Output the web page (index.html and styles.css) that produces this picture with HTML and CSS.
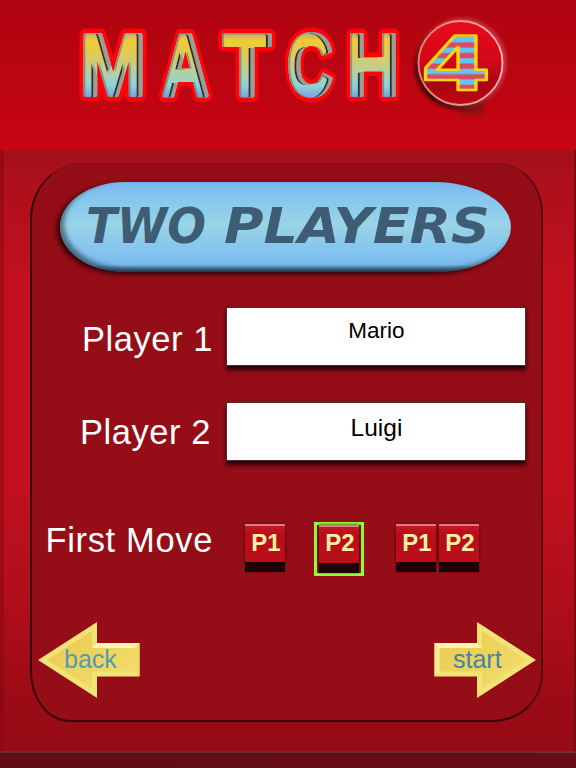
FILE: index.html
```html
<!DOCTYPE html>
<html lang="en">
<head>
<meta charset="utf-8">
<title>Match 4</title>
<link rel="stylesheet" href="styles.css">
</head>
<body>
<header class="banner">
  <svg class="logo" viewBox="0 0 576 150" role="img" aria-label="Match 4">
    <defs>
      <linearGradient id="metal" gradientUnits="userSpaceOnUse" x1="0" y1="31" x2="0" y2="97">
        <stop offset="0" stop-color="#a8a291"/><stop offset=".14" stop-color="#f1cb32"/><stop offset=".36" stop-color="#dfca58"/>
        <stop offset=".6" stop-color="#b9cf9b"/><stop offset=".82" stop-color="#8ed4d5"/><stop offset="1" stop-color="#7ba2df"/>
      </linearGradient>
      <linearGradient id="ball" x1="0" y1="0" x2="0" y2="1">
        <stop offset="0" stop-color="#e90a19"/><stop offset=".45" stop-color="#d4081a"/><stop offset=".75" stop-color="#aa0410"/><stop offset="1" stop-color="#c00713"/>
      </linearGradient>
      <linearGradient id="rim" x1="0" y1="0" x2="1" y2="0">
        <stop offset="0" stop-color="#e78373"/><stop offset=".6" stop-color="#ee9b90"/><stop offset="1" stop-color="#f7b7ba"/>
      </linearGradient>
      <pattern id="stripes" patternUnits="userSpaceOnUse" y="37" width="576" height="10.6">
        <rect width="576" height="10.6" fill="#dc4b63"/><rect width="576" height="5.3" fill="#64c4f7"/>
      </pattern>
      <filter id="soft" x="-20%" y="-20%" width="140%" height="140%"><feGaussianBlur stdDeviation="2"/></filter>
      <filter id="bevel" x="-5%" y="-10%" width="110%" height="120%">
        <feOffset in="SourceAlpha" dx="-6" dy="1" result="o1"/>
        <feComposite in="SourceAlpha" in2="o1" operator="out" result="e1"/>
        <feFlood flood-color="#2f322a"/><feComposite in2="e1" operator="in" result="line"/>
        <feGaussianBlur in="line" stdDeviation=".5" result="lineSoft"/>
        <feComposite in="lineSoft" in2="SourceAlpha" operator="in" result="lineIn"/>
        <feOffset in="SourceAlpha" dx="-4.5" dy="1" result="o2"/>
        <feComposite in="SourceAlpha" in2="o2" operator="out" result="e2"/>
        <feFlood flood-color="#9e9c96"/><feComposite in2="e2" operator="in" result="grey"/>
        <feOffset in="SourceAlpha" dx="1.5" dy="0" result="o3"/>
        <feComposite in="SourceAlpha" in2="o3" operator="out" result="e3"/>
        <feFlood flood-color="#6d8380" flood-opacity=".8"/><feComposite in2="e3" operator="in" result="left"/>
        <feMerge><feMergeNode in="SourceGraphic"/><feMergeNode in="lineIn"/><feMergeNode in="grey"/><feMergeNode in="left"/></feMerge>
      </filter>
    </defs>
    <g class="word word-outline" aria-hidden="true">
      <text x="80" y="95" textLength="66" lengthAdjust="spacingAndGlyphs">M</text>
      <text x="162" y="95" textLength="47" lengthAdjust="spacingAndGlyphs">A</text>
      <text x="223" y="95" textLength="48" lengthAdjust="spacingAndGlyphs">T</text>
      <text x="287" y="95" textLength="46" lengthAdjust="spacingAndGlyphs">C</text>
      <text x="347" y="95" textLength="52" lengthAdjust="spacingAndGlyphs">H</text>
    </g>
    <g class="word word-fill" filter="url(#bevel)">
      <text x="80" y="95" textLength="66" lengthAdjust="spacingAndGlyphs">M</text>
      <text x="162" y="95" textLength="47" lengthAdjust="spacingAndGlyphs">A</text>
      <text x="223" y="95" textLength="48" lengthAdjust="spacingAndGlyphs">T</text>
      <text x="287" y="95" textLength="46" lengthAdjust="spacingAndGlyphs">C</text>
      <text x="347" y="95" textLength="52" lengthAdjust="spacingAndGlyphs">H</text>
    </g>
    <rect x="460" y="95" width="24" height="20" fill="#8d0710" filter="url(#soft)"/>
    <circle cx="457.5" cy="66.500" r="42" fill="#240005" filter="url(#soft)"/>
    <circle cx="462" cy="62.500" r="42" fill="none" stroke="#f39ba0" stroke-width="2.500" opacity=".7" filter="url(#soft)"/>
    <circle cx="460.500" cy="63" r="42" fill="url(#ball)" stroke="url(#rim)" stroke-width="1.800"/>
    <text class="four" x="421" y="90" textLength="70" lengthAdjust="spacingAndGlyphs">4</text>
  </svg>
</header>
<main class="board">
  <section class="panel">
    <h1 class="pill">
      <svg class="heading" viewBox="0 0 451 91" role="img" aria-label="Two players">
        <g class="heading-text">
          <text x="26" y="61" textLength="120" lengthAdjust="spacingAndGlyphs">TWO</text>
          <text x="164" y="61" textLength="266" lengthAdjust="spacingAndGlyphs">PLAYERS</text>
        </g>
      </svg>
    </h1>
    <div class="row row-one"><span class="label">Player 1</span><div class="field first">Mario</div></div>
    <div class="row row-two"><span class="label">Player 2</span><div class="field second">Luigi</div></div>
    <div class="row row-move">
      <span class="label">First Move</span>
      <div class="choices">
        <div class="choice"><span class="key">P1</span></div>
        <div class="choice selected"><span class="key">P2</span></div>
        <div class="choice pair"><span class="key">P1</span><span class="key">P2</span></div>
      </div>
    </div>
    <nav class="actions">
      <a class="arrow">
        <svg viewBox="0 0 102 76">
          <defs><linearGradient id="gold" x1="0" y1="0" x2="1" y2="1"><stop offset="0" stop-color="#e9c950"/><stop offset=".5" stop-color="#eed45e"/><stop offset="1" stop-color="#f3df70"/></linearGradient></defs>
          <path d="M0 38 59 0v21h42.500v33.500H59V76Z" fill="#f1e376"/>
          <path d="M9 38 54 9v17h42.500v23.500H54V67Z" fill="url(#gold)"/>
          <path d="M59 21h42.500l-5 5H54Z" fill="#fff2b4"/>
          <path d="M101.500 21v33.500l-5-5V26Z" fill="#f0da65"/>
          <text class="arrow-text" x="26" y="45.500">back</text>
        </svg>
      </a>
      <a class="arrow">
        <svg viewBox="0 0 102 76">
          <path d="M102 38 43 0v21H.5v33.500H43V76Z" fill="#f1e376"/>
          <path d="M93 38 48 9v17H5.500v23.500H48V67Z" fill="url(#gold)"/>
          <path d="M43 21H.5l5 5H48Z" fill="#fff2b4"/>
          <path d="M.5 21v33.500l5-5V26Z" fill="#f8e994"/>
          <text class="arrow-text deep" x="19" y="45.500">start</text>
        </svg>
      </a>
    </nav>
  </section>
</main>
<footer class="base"></footer>
</body>
</html>
```
FILE: styles.css
```css
* { box-sizing: border-box; }
body {
  margin: 0;
  width: 576px;
  height: 768px;
  overflow: hidden;
  display: flex;
  flex-direction: column;
  background: #970b15;
  font-family: "Liberation Sans", Arial, sans-serif;
}
svg { display: block; overflow: visible; }
.banner { height: 150px; background: linear-gradient(#ae0410, #c80513); }
.logo { width: 576px; height: 150px; }
.word { font: bold 88px "Liberation Sans", Arial, sans-serif; stroke-linejoin: round; }
.word-outline { fill: #ff0308; stroke: #ff0308; stroke-width: 13px; }
.word-fill { fill: url(#metal); stroke: url(#metal); stroke-width: 4px; }
.four {
  font: bold 75px "DejaVu Sans", sans-serif;
  fill: url(#stripes);
  stroke: #f6d80e;
  stroke-width: 2.5px;
  stroke-linejoin: round;
}
.board {
  height: 601px;
  padding: 13px 32px 29px 26px;
  border-left: 4px solid rgba(130, 5, 20, .45);
  border-right: 2px solid #7c0914;
  background: linear-gradient(#a3111b 0, #b10f1b 45px, #c4101e 140px, #c4101e 320px, #b00e1a 450px, #990b15 560px, #970b15 100%);
}
.panel {
  width: 513px;
  height: 559px;
  padding: 18px 0 0 28px;
  border: 2px solid #35050b;
  border-top: 1px solid #791016;
  border-right-color: #580a13;
  border-radius: 52px 46px 50px 40px / 56px 50px 48px 50px;
  background: #940d17;
}
.pill {
  margin: 0;
  width: 451px;
  height: 90px;
  border-radius: 66px 78px 74px 66px / 46px;
  background: linear-gradient(#79b9f1 0, #8acaec 25%, #9ad4e7 48%, #83c3ee 78%, #78bbed 92%, #4f7f9e 96%, #304b5e 100%);
  box-shadow: inset 4px -3px 5px rgba(22, 45, 60, .6), -3px 2px 5px #270209;
}
.heading { width: 451px; height: 91px; }
.heading-text {
  font: italic bold 49px "DejaVu Sans", sans-serif;
  fill: #3e5d75;
}
.row { display: flex; align-items: flex-start; margin-left: -29px; }
.label {
  width: 182px;
  color: #fff;
  font-size: 34.5px;
  line-height: 40px;
  letter-spacing: .55px;
  text-align: right;
  white-space: nowrap;
}
.row-one { margin-top: 35px; height: 59px; }
.row-one .label { margin-top: 12px; }
.row-two { margin-top: 36px; height: 59px; }
.row-two .label { margin-top: 10px; width: 180px; }
.field {
  width: 300px;
  height: 59px;
  margin-left: 13px;
  padding-left: 1px;
  background: #fff;
  border: 1px solid #54272a;
  box-shadow: 0 4px 4px #280308;
  color: #000;
  text-align: center;
}
.row-two .field { margin-left: 15px; }
.first { font-size: 22.5px; line-height: 46px; }
.second { font-size: 24.5px; line-height: 50px; }
.row-move { margin-top: 61px; height: 53px; }
.row-move .label { margin-top: -2px; width: 182px; letter-spacing: .65px; }
.choices { display: flex; margin-left: 32px; }
.choice { display: flex; gap: 3px; padding-top: 2px; }
.key {
  display: block;
  width: 40px;
  height: 38px;
  padding-left: 2px;
  border-top: 2px solid #d98086;
  background: linear-gradient(#c31925 0, #b80e1a 20%, #bb0e1b 100%);
  box-shadow: 0 10px 1px #200005, 0 0 3px #5a050d;
  color: #fbf0a0;
  font-size: 24px;
  font-weight: bold;
  line-height: 34px;
  text-align: center;
}
.selected {
  width: 50px;
  height: 54px;
  margin-left: 29px;
  padding: 0 0 0 2px;
  border: 3px solid #8cff3b;
}
.selected .key { line-height: 32px; }
.pair { margin-left: 32px; }
.actions { display: flex; justify-content: space-between; width: 498px; margin: 47px 0 0 -22px; }
.arrow { width: 102px; height: 76px; }
.arrow svg { width: 102px; height: 76px; }
.arrow-text { font-size: 25px; fill: #5699b5; }
.deep { fill: #4584a5; }
.base { height: 17px; border-top: 2px solid #5e3439; background: linear-gradient(90deg, #610c16, #680c17); }
```
